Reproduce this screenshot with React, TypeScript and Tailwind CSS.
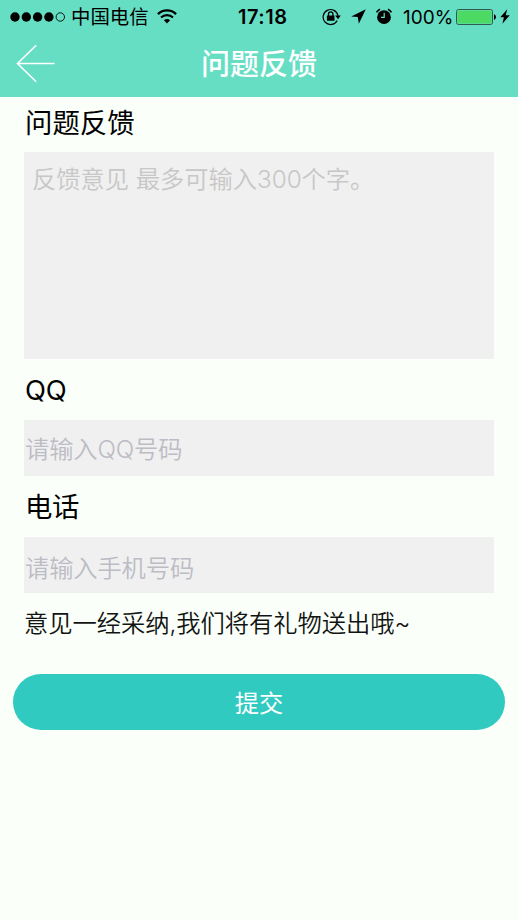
import { useState } from 'react'
import type { InputHTMLAttributes } from 'react'

const SignalDots = () => (
  <svg width="56" height="12" viewBox="0 0 56 12" className="shrink-0">
    {[5, 16.3, 27.6, 38.9].map((cx) => (
      <circle key={cx} cx={cx} cy="6" r="4.7" fill="#000" />
    ))}
    <circle cx="50.3" cy="6" r="4.2" fill="none" stroke="#000" strokeWidth="0.9" />
  </svg>
)

const WifiIcon = () => (
  <svg width="20" height="15" viewBox="0 0 20 15" fill="none" stroke="#000" className="shrink-0">
    <path d="M0.9 5.1a13 13 0 0 1 18.2 0" strokeWidth="2.2" />
    <path d="M4 8.6a8.6 8.6 0 0 1 12 0" strokeWidth="2.1" />
    <path d="M6.9 11.3a4.6 4.6 0 0 1 6.2 0L10 14.4z" fill="#000" stroke="none" />
  </svg>
)

const RotationLockIcon = () => (
  <svg width="20" height="18" viewBox="0 0 20 18" fill="none" stroke="#000" className="shrink-0">
    <path d="M15.2 12.6A7.5 7.5 0 1 1 16 7.8" strokeWidth="1.2" />
    <path d="M13.2 7.4h5.6L16 11.2z" fill="#000" stroke="none" />
    <rect x="4.9" y="7.5" width="7.6" height="5.2" rx="0.5" fill="#000" stroke="none" />
    <path d="M6.5 8V6.1a2.2 2.2 0 0 1 4.4 0V8" strokeWidth="1.3" />
  </svg>
)

const LocationIcon = () => (
  <svg width="15" height="15" viewBox="0 0 15 15" className="shrink-0">
    <path d="M14.8 0.2L0.2 7.5l6.6 0.6 1 6.7z" fill="#000" />
  </svg>
)

const AlarmIcon = () => (
  <svg width="18" height="17" viewBox="0 0 18 17" fill="none" className="shrink-0">
    <circle cx="9" cy="9.2" r="6.9" fill="#000" />
    <path d="M1.5 4.4A8 8 0 0 1 5 1.3M13 1.3a8 8 0 0 1 3.5 3.1" stroke="#000" strokeWidth="1.6" />
    <path d="M9.2 4.8V9.3H5.9" stroke="#66dec4" strokeWidth="1.2" />
  </svg>
)

const BatteryIcon = () => (
  <svg width="41" height="16" viewBox="0 0 41 16" className="shrink-0">
    <rect x="0.5" y="0.5" width="36" height="15" rx="2" fill="none" stroke="#2f5a50" />
    <rect x="1.4" y="1.4" width="34.2" height="13.2" rx="1" fill="#4cd964" />
    <path d="M38 5.2c2.6 0.6 2.6 5 0 5.6z" fill="#000" />
  </svg>
)

const BoltIcon = () => (
  <svg width="10" height="15" viewBox="0 0 10 15" className="shrink-0">
    <path d="M7.2 0.3L0.3 8.3h3.6L2.4 14.7 9.7 6.2H5.7z" fill="#000" />
  </svg>
)

const StatusBar = () => (
  <div className="flex h-[33px] items-center pl-2.5 text-[19.4px] leading-[33px] text-black">
    <SignalDots />
    <span className="ml-[5px] w-[78px] pt-px whitespace-nowrap">中国电信</span>
    <span className="ml-[8px]">
      <WifiIcon />
    </span>
    <span className="ml-[61px] w-[50px] pt-px text-[20px] font-semibold tracking-[0.5px] whitespace-nowrap">
      17:18
    </span>
    <span className="ml-[34px]">
      <RotationLockIcon />
    </span>
    <span className="ml-[9px]">
      <LocationIcon />
    </span>
    <span className="ml-[9px]">
      <AlarmIcon />
    </span>
    <span className="ml-[10px] w-[50px] pt-px text-[19px] whitespace-nowrap">100%</span>
    <span className="ml-[3px]">
      <BatteryIcon />
    </span>
    <span className="ml-[3px]">
      <BoltIcon />
    </span>
  </div>
)

const NavBar = ({ title }: { title: string }) => (
  <div className="grid h-16 grid-cols-[1fr_auto_1fr] items-center px-4 text-white">
    <button type="button" aria-label="返回" className="w-fit pb-0.5">
      <svg width="40" height="40" viewBox="0 0 40 40" fill="none" stroke="#fff" strokeWidth="1.6">
        <path d="M20.2 1.2L1.5 19.5l18.7 18.3M1.5 19.5H38.5" />
      </svg>
    </button>
    <h1 className="text-[29px] leading-[62px] font-medium">{title}</h1>
  </div>
)

const Field = ({ label, ...props }: { label: string } & InputHTMLAttributes<HTMLInputElement>) => (
  <label className="block">
    <span className="block h-[61px] pl-px text-[27.4px] leading-[62px] tracking-[-0.3px]">{label}</span>
    <input
      {...props}
      className="block h-14 w-full bg-[#f0f0f0] pt-px pl-px text-[24.3px] font-[350] tracking-[-0.15px] outline-none placeholder:text-[#bcbcc5] [&[type=tel]]:pt-1.5"
    />
  </label>
)

export default function App() {
  const [content, setContent] = useState('')
  const [qq, setQq] = useState('')
  const [phone, setPhone] = useState('')

  return (
    <div className="min-h-screen bg-[#fbfff9] font-['Inter','Noto_Sans_CJK_SC',sans-serif] text-black">
      <header className="bg-[#66dec4]">
        <StatusBar />
        <NavBar title="问题反馈" />
      </header>
      <form onSubmit={(e) => e.preventDefault()}>
        <div className="px-6">
          <label className="block">
            <span className="block h-[55px] pl-px text-[27.4px] leading-[53px]">问题反馈</span>
            <textarea
              value={content}
              maxLength={300}
              onChange={(e) => setContent(e.target.value)}
              placeholder="反馈意见 最多可输入300个字。"
              className="block h-[207px] w-full resize-none bg-[#f0f0f0] px-2 pt-[9px] text-[24.3px] leading-9 font-[350] tracking-[-0.05px] outline-none placeholder:text-[#c7c7c7]"
            />
          </label>
          <Field
            label="QQ"
            value={qq}
            onChange={(e) => setQq(e.target.value)}
            placeholder="请输入QQ号码"
          />
          <Field
            label="电话"
            type="tel"
            value={phone}
            onChange={(e) => setPhone(e.target.value)}
            placeholder="请输入手机号码"
          />
          <p className="h-[81px] text-[24.3px] leading-[60px] font-[350] tracking-[-0.05px] text-[#111412]">
            意见一经采纳,我们将有礼物送出哦~
          </p>
        </div>
        <div className="px-[13px]">
          <button type="submit" className="block h-14 w-full rounded-full bg-[#30cac1] pt-0.5 text-[24.3px] text-white">
            提交
          </button>
        </div>
      </form>
    </div>
  )
}
